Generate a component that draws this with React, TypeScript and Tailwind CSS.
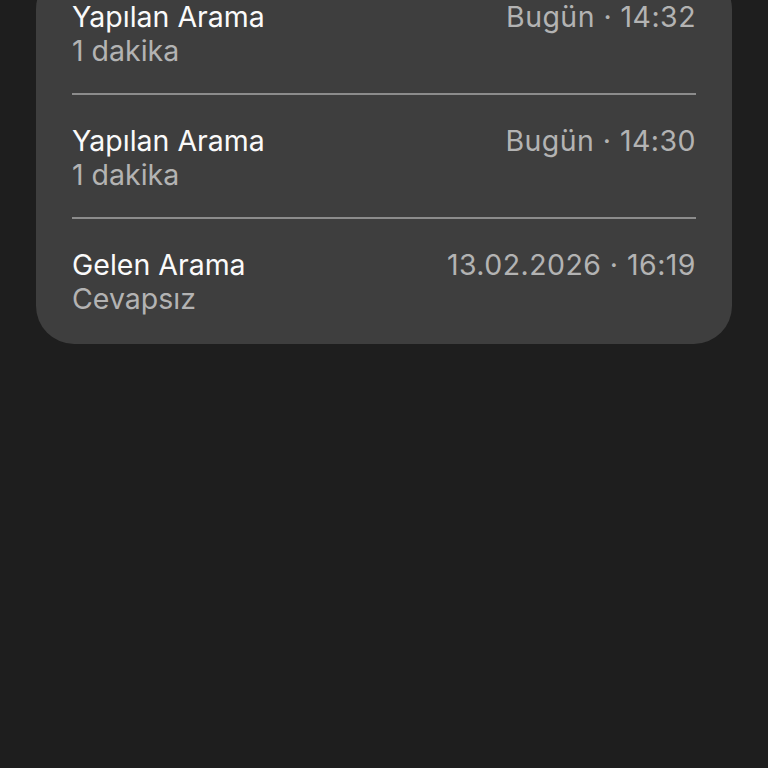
import React from 'react'

interface CallEntry {
  title: string
  detail: string
  time: string
}

const calls: CallEntry[] = [
  { title: 'Yapılan Arama', detail: '1 dakika', time: 'Bugün · 14:32' },
  { title: 'Yapılan Arama', detail: '1 dakika', time: 'Bugün · 14:30' },
  { title: 'Gelen Arama', detail: 'Cevapsız', time: '13.02.2026 · 16:19' },
]

export default function App() {
  return (
    <div
      className="w-[768px] h-[768px] overflow-hidden bg-[#1e1e1e]"
      style={{ fontFamily: 'Inter, "Noto Sans", sans-serif' }}
    >
      <div className="mx-9 -mt-[29px] rounded-[38px] bg-[#3e3e3e] px-9">
        {calls.map((call, i) => (
          <div
            key={i}
            className={
              i < calls.length - 1
                ? 'flex justify-between pt-[29px] pb-[25px] border-b-2 border-[#8c8c8c]'
                : 'flex justify-between pt-[29px] pb-[28px]'
            }
          >
            <div className="flex flex-col">
              <span className="text-[28.5px] leading-[34px] text-[#fafafa]">{call.title}</span>
              <span className="text-[28.5px] leading-[34px] text-[#b3b3b3]">{call.detail}</span>
            </div>
            <span className="text-[28.5px] leading-[34px] tracking-[0.45px] text-[#b3b3b3]">{call.time}</span>
          </div>
        ))}
      </div>
    </div>
  )
}
